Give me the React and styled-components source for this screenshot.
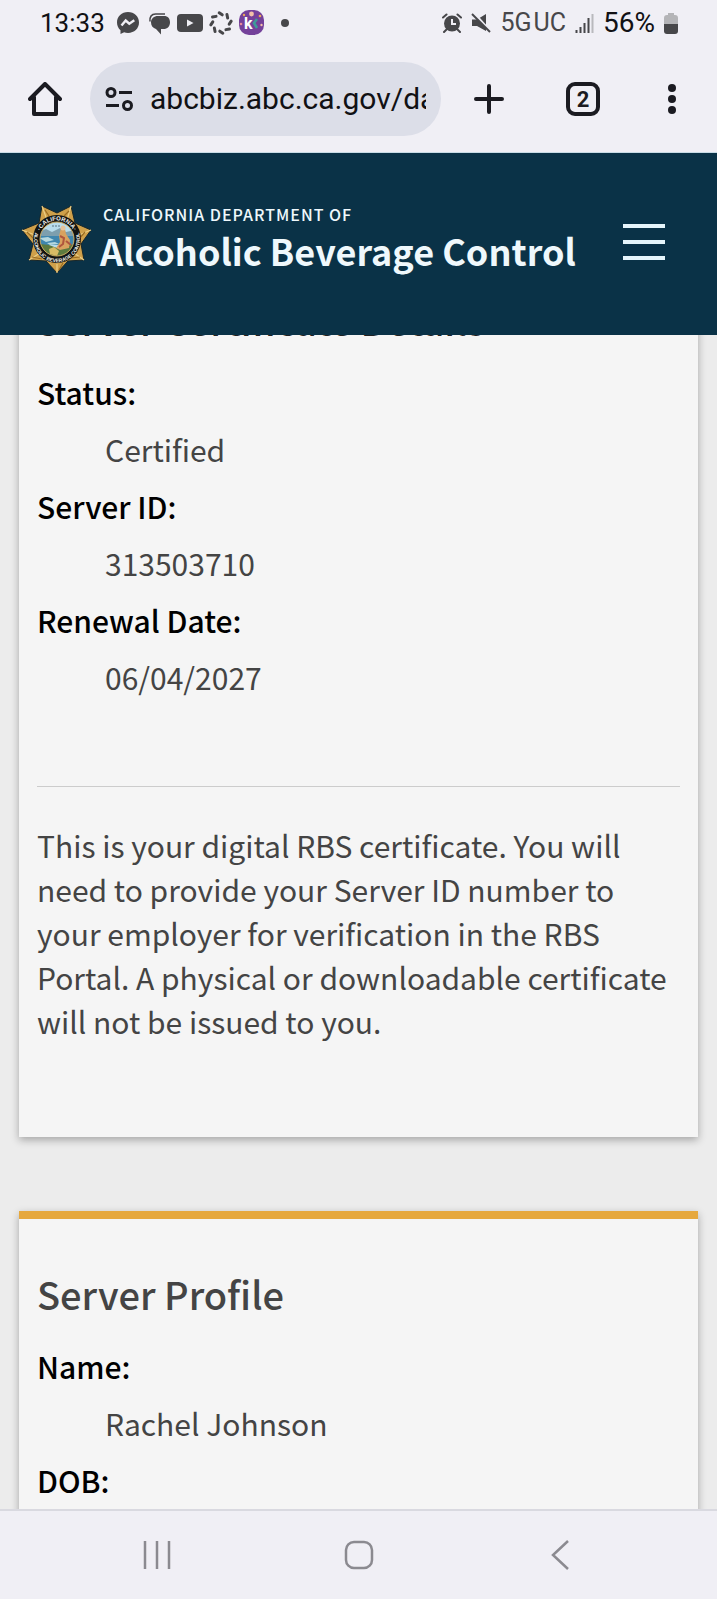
import React from 'react'
import styled, { createGlobalStyle } from 'styled-components'

const details = [
  { label: 'Status:', value: 'Certified' },
  { label: 'Server ID:', value: '313503710' },
  { label: 'Renewal Date:', value: '06/04/2027' },
]

const profile = [
  { label: 'Name:', value: 'Rachel Johnson' },
  { label: 'DOB:' },
]

function MessengerIcon() {
  return (
    <Icon width="26" height="26" viewBox="0 0 26 26">
      <path d="M13 2C6.700 2 2 6.500 2 12.500c0 3.200 1.300 5.900 3.500 7.700V24l3.600-1.700c1.200.4 2.500.6 3.900.6 6.300 0 11-4.500 11-10.400S19.300 2 13 2z" fill="#47474a" />
      <path d="M6.500 15.500l4.200-5 3.600 3.200 5-3.400" fill="none" stroke="#f0eff5" strokeWidth="2.400" />
    </Icon>
  )
}

function ChatIcon() {
  return (
    <Icon width="26" height="26" viewBox="0 0 26 26">
      <path d="M4 11.500C3.500 7 5.500 4 9.500 4H19" fill="none" stroke="#47474a" strokeWidth="1.600" />
      <path d="M12 6h6c4 0 6 2.700 6 6.500S21.500 19 17.500 19H15v5.500L10 19c-3-.8-5-3.300-5-6.500C5 8.500 8 6 12 6z" fill="#47474a" />
    </Icon>
  )
}

function VideoIcon() {
  return (
    <Icon width="26" height="26" viewBox="0 0 26 26">
      <rect y="4" width="26" height="18" rx="4" fill="#47474a" />
      <path d="M10 9.500v7l6.500-3.500z" fill="#f0eff5" />
    </Icon>
  )
}

function SwirlIcon() {
  return (
    <Icon width="26" height="26" viewBox="0 0 26 26">
      {[0, 45, 90, 135, 180, 225, 270, 315].map((a) => (
        <line key={a} x1="11.200" y1="2.800" x2="14.200" y2="4.800" transform={`rotate(${a} 13 13)`} stroke="#47474a" strokeWidth="3" strokeLinecap="round" />
      ))}
    </Icon>
  )
}

function AppIcon() {
  return (
    <Icon width="26" height="26" viewBox="0 0 26 26">
      <rect width="25" height="25" rx="10" fill="#74419a" />
      <circle cx="12.500" cy="4" r="2.400" fill="#f3c0a8" />
      <circle cx="5" cy="5" r="1.200" fill="#e9a75b" />
      <circle cx="21" cy="6" r="1.300" fill="#e9a75b" />
      <circle cx="2" cy="14" r="1.300" fill="#e58a9a" />
      <circle cx="22.500" cy="15" r="1.200" fill="#f3c0a8" />
      <text x="5" y="19" fontSize="16" fontWeight="700" fontFamily="Roboto, sans-serif" fill="#fff">k</text>
      <path d="M18 9l-3 4 3 5" fill="none" stroke="#3f9a9a" strokeWidth="2.600" />
    </Icon>
  )
}

function DotIcon() {
  return (
    <Icon width="26" height="26" viewBox="0 0 26 26">
      <circle cx="15" cy="13" r="4" fill="#47474a" />
    </Icon>
  )
}

function AlarmIcon() {
  return (
    <Icon width="20" height="20" viewBox="0 0 20 20">
      <circle cx="10" cy="10.500" r="8" fill="#47474a" />
      <path d="M1 4.500L4.500 1.500M19 4.500L15.500 1.500M4.500 16.500L2 19M15.500 16.500L18 19" stroke="#47474a" strokeWidth="2" strokeLinecap="round" />
      <path d="M10 6v5h4" fill="none" stroke="#f0eff5" strokeWidth="2" />
    </Icon>
  )
}

function MuteIcon() {
  return (
    <Icon width="20" height="20" viewBox="0 0 20 20">
      <path d="M1 6.500h5L15 1v17l-9-5H1z" fill="#47474a" />
      <path d="M2 -1l18 20" stroke="#f0eff5" strokeWidth="2.500" />
      <path d="M1 1l18 18" stroke="#47474a" strokeWidth="2" />
    </Icon>
  )
}

function SignalIcon() {
  return (
    <Icon width="19" height="20" viewBox="0 0 19 20">
      <path d="M1.500 17v3M5.500 14v6M9.500 10v10M13.500 5v15" stroke="#47474a" strokeWidth="2" />
      <path d="M17.500 1v19" stroke="#b9b9bd" strokeWidth="2" />
    </Icon>
  )
}

function BatteryIcon() {
  return (
    <Icon width="14" height="21" viewBox="0 0 14 21">
      <path d="M4 0h6v2h1a3 3 0 0 1 3 3v6H0V5a3 3 0 0 1 3-3h1z" fill="#b4b4b7" />
      <path d="M0 11h14v7a3 3 0 0 1-3 3H3a3 3 0 0 1-3-3z" fill="#47474a" />
    </Icon>
  )
}

function HomeIcon() {
  return (
    <Icon width="34" height="34" viewBox="0 0 34 34" fill="none" stroke="#1b1b21" strokeWidth="4" strokeLinejoin="round" strokeLinecap="round">
      <path d="M2 17L17 2l15 15M6 15v17h22V15" />
    </Icon>
  )
}

function SiteInfoIcon() {
  return (
    <Icon width="28" height="24" viewBox="0 0 28 24" fill="none" stroke="#1b1b21" strokeWidth="3">
      <circle cx="6" cy="5.500" r="4" />
      <path d="M14 5.500h13M1 18.500h13" />
      <circle cx="22.500" cy="18.500" r="4" />
    </Icon>
  )
}

function PlusIcon() {
  return (
    <Icon width="30" height="30" viewBox="0 0 30 30" stroke="#1b1b21" strokeWidth="4" strokeLinecap="round">
      <path d="M15 2v26M2 15h26" />
    </Icon>
  )
}

function DotsIcon() {
  return (
    <Icon width="8" height="32" viewBox="0 0 8 32" fill="#1b1b21">
      <circle cx="4" cy="5" r="4" />
      <circle cx="4" cy="16" r="4" />
      <circle cx="4" cy="27" r="4" />
    </Icon>
  )
}

function Badge() {
  return (
    <Icon width="72" height="71" viewBox="0 0 72 71">
      <defs>
        <path id="ringTop" d="M17.500 35a18.500 18.500 0 0 1 37 0" />
        <path id="ringBottom" d="M14.500 27a23 23 0 1 0 43 0" />
        <clipPath id="seal"><circle cx="36" cy="35" r="17" /></clipPath>
      </defs>
      <path d="M21 2l15 7 14-7 4 17 16 7-10 14 3 16-16 1-11 12-11-12-17-1 4-16L1 26l17-7z" fill="#cfa04a" stroke="#17262a" strokeWidth="1" />
      <path d="M21 2l5 14M50 2l-4 14M70 26l-12 5M63 56l-10-7M36 69v-9M8 56l11-7M1 26l13 5" stroke="#ecce84" strokeWidth="1.200" />
      <path d="M24 6l4 6M48 7l-5 5M64 28l-6 7M59 53l-9 1M38 66l4-7M11 53l10 2M6 28l7 7" stroke="#9a6c22" strokeWidth="1.200" />
      <circle cx="36" cy="35" r="24" fill="#101313" />
      <circle cx="36" cy="35" r="17" fill="#b8dcec" />
      <g clipPath="url(#seal)">
        <path d="M18 28l7-3 6 3 8-4 6 4 9-2v12H18z" fill="#7d9fae" />
        <path d="M18 32h36v9H18z" fill="#3f86ae" />
        <path d="M18 34l9-1 6 3-8 2zM26 39l8-1 4 2-9 1z" fill="#b5d8df" />
        <path d="M18 40l10 1 8 3 18-4v13H18z" fill="#5d7a3f" />
        <path d="M40 24l4 1 1 5 4 6-1 8-9 2-4-2 4-6-1-6z" fill="#d9a25f" />
        <path d="M39 32l4 2-1 6-4 3M45 37l5 4" fill="none" stroke="#b0553d" strokeWidth="2" />
        <circle cx="42" cy="24" r="2.500" fill="#e4c29a" />
        <path d="M28 45l5-2 5 4-2 5-7-2z" fill="#d8bc65" />
        <path d="M31 22h9" stroke="#5a7484" strokeWidth="1" strokeDasharray="2 1" />
      </g>
      <circle cx="36" cy="35" r="17" fill="none" stroke="#c9a557" strokeWidth="1" />
      <RingText $size="6px"><textPath href="#ringTop" startOffset="50%">·CALIFORNIA·</textPath></RingText>
      <RingText $size="5px"><textPath href="#ringBottom" startOffset="50%">ALCOHOLIC BEVERAGE CONTROL</textPath></RingText>
    </Icon>
  )
}

function DetailList({ items }) {
  return (
    <List>
      {items.map((item) => (
        <React.Fragment key={item.label}>
          <Label>{item.label}</Label>
          {item.value && <Value>{item.value}</Value>}
        </React.Fragment>
      ))}
    </List>
  )
}

function App() {
  return (
    <Screen>
      <GlobalStyle />
      <StatusBar>
        <Notifications>
          <Clock>13:33</Clock>
          <MessengerIcon />
          <ChatIcon />
          <VideoIcon />
          <SwirlIcon />
          <AppIcon />
          <DotIcon />
        </Notifications>
        <System>
          <AlarmIcon />
          <MuteIcon />
          <Network>5G<span>UC</span></Network>
          <SignalIcon />
          <Percent>56%</Percent>
          <BatteryIcon />
        </System>
      </StatusBar>

      <Toolbar>
        <IconButton aria-label="Home"><HomeIcon /></IconButton>
        <AddressBar>
          <SiteInfoIcon />
          <Address aria-label="Address" defaultValue="abcbiz.abc.ca.gov/dashboard" />
        </AddressBar>
        <Actions>
          <IconButton aria-label="New tab"><PlusIcon /></IconButton>
          <IconButton aria-label="Tabs"><TabCount>2</TabCount></IconButton>
          <IconButton $narrow aria-label="Menu"><DotsIcon /></IconButton>
        </Actions>
      </Toolbar>

      <SiteHeader>
        <Brand href="#">
          <Badge />
          <BrandText>
            <Department>CALIFORNIA DEPARTMENT OF</Department>
            <Agency>Alcoholic Beverage Control</Agency>
          </BrandText>
        </Brand>
        <MenuButton aria-label="Open menu">
          <span />
          <span />
          <span />
        </MenuButton>
      </SiteHeader>

      <Main>
        {/* scrolled up under the site header */}
        <Card $scrolled>
          <CardTitle $dark>Server Certificate Details</CardTitle>
          <DetailList items={details} />
          <Divider />
          <Note>
            This is your digital RBS certificate. You will need to provide your Server ID number to
            your employer for verification in the RBS Portal. A physical or downloadable certificate
            will not be issued to you.
          </Note>
        </Card>
        <Card>
          <CardTitle>Server Profile</CardTitle>
          <DetailList items={profile} />
        </Card>
      </Main>

      <NavBar>
        <NavButton aria-label="Recent apps">
          <Icon width="28" height="30" viewBox="0 0 28 30" stroke="#8b8a90" strokeWidth="2.500">
            <path d="M2 1v28M14 1v28M26 1v28" />
          </Icon>
        </NavButton>
        <NavButton aria-label="Home screen">
          <Icon width="30" height="30" viewBox="0 0 30 30" fill="none" stroke="#8b8a90" strokeWidth="2.500">
            <rect x="2" y="2" width="26" height="26" rx="8" />
          </Icon>
        </NavButton>
        <NavButton aria-label="Back">
          <Icon width="18" height="30" viewBox="0 0 18 30" fill="none" stroke="#8b8a90" strokeWidth="2.500">
            <path d="M17 1L2 15l15 14" />
          </Icon>
        </NavButton>
      </NavBar>
    </Screen>
  )
}

export default App

const GlobalStyle = createGlobalStyle`
    * {
        box-sizing: border-box;
    }

    body {
        margin: 0;
        font-family: "Noto Sans CJK SC", "Open Sans", sans-serif;
        color: #444444;
        background: #ECECEC;
    }

    button {
        padding: 0;
        border: 0;
        background: none;
        font: inherit;
    }
`

const Screen = styled.div`
    height: 100vh;
    display: flex;
    flex-direction: column;
    overflow: hidden;
`

const Icon = styled.svg`
    display: block;
    flex: none;
`

const RingText = styled.text`
    font-family: "Liberation Sans", sans-serif;
    font-size: ${({ $size }) => $size};
    font-weight: 700;
    text-anchor: middle;
    fill: #F4F4F0;
`

const StatusBar = styled.div`
    flex: none;
    height: 46px;
    padding: 0 39px 0 40px;
    display: flex;
    justify-content: space-between;
    align-items: center;
    background: #F0EFF5;
    font-family: Roboto, sans-serif;
    font-size: 26px;
    line-height: 30px;
    color: #111114;
`

const Notifications = styled.div`
    display: flex;
    align-items: center;
    gap: 5px;
`

const Clock = styled.span`
    margin-right: 5px;
`

const System = styled.div`
    display: flex;
    align-items: center;
    gap: 9px;
`

const Network = styled.span`
    display: flex;
    gap: 2px;
    font-size: 25px;
    color: #47474A;
`

const Percent = styled.span`
    font-size: 28px;
`

const Toolbar = styled.div`
    flex: none;
    height: 107px;
    padding: 0 26px 0 21px;
    display: flex;
    align-items: center;
    background: #F0EFF5;
    border-bottom: 1px solid #C9DCE6;
`

const IconButton = styled.button`
    flex: none;
    width: ${({ $narrow }) => ($narrow ? '38px' : '48px')};
    height: 48px;
    display: flex;
    justify-content: center;
    align-items: center;
`

const AddressBar = styled.div`
    flex: 1;
    min-width: 0;
    height: 74px;
    margin: 0 24px 0 21px;
    padding: 0 15px;
    display: flex;
    align-items: center;
    gap: 17px;
    background: #DCDEE8;
    border-radius: 999px;
`

const Address = styled.input`
    flex: 1;
    min-width: 0;
    padding: 0;
    border: 0;
    outline: 0;
    background: none;
    font-family: Roboto, sans-serif;
    font-size: 30px;
    line-height: 40px;
    color: #111114;
`

const Actions = styled.div`
    display: flex;
    gap: 46px;
`

const TabCount = styled.span`
    width: 34px;
    height: 34px;
    display: flex;
    justify-content: center;
    align-items: center;
    border: 4px solid #1B1B21;
    border-radius: 9px;
    font-family: Roboto, sans-serif;
    font-size: 22px;
    font-weight: 700;
    color: #1B1B21;
`

const SiteHeader = styled.header`
    flex: none;
    height: 182px;
    padding: 51px 52px 0 21px;
    display: flex;
    justify-content: space-between;
    align-items: flex-start;
    background: #0A3247;
`

const Brand = styled.a`
    display: flex;
    gap: 7px;
    color: #EFF8FC;
    text-decoration: none;
`

const BrandText = styled.div`
    display: flex;
    flex-direction: column;
`

const Department = styled.span`
    padding-left: 3px;
    font-size: 16px;
    font-weight: 500;
    line-height: 20px;
    letter-spacing: 1px;
`

const Agency = styled.span`
    font-size: 36px;
    font-weight: 700;
    line-height: 52px;
    white-space: nowrap;
`

const MenuButton = styled.button`
    width: 42px;
    height: 36px;
    margin-top: 20px;
    display: flex;
    flex-direction: column;
    justify-content: space-between;

    span {
        width: 100%;
        height: 4px;
        background: #E6F5FB;
    }
`

const Main = styled.main`
    flex: 1;
    min-height: 0;
    padding: 0 19px;
    overflow: hidden;
`

const Card = styled.section`
    margin-top: ${({ $scrolled }) => ($scrolled ? '-98px' : '74px')};
    padding: 47px 18px 94px;
    background: #F5F5F5;
    border-top: 8px solid #E6A83E;
    box-shadow: 0 3px 8px rgba(0, 0, 0, 0.3);
`

const CardTitle = styled.h2`
    margin: 0;
    font-size: 38px;
    font-weight: 500;
    line-height: 56px;
    color: ${({ $dark }) => ($dark ? '#222222' : '#444444')};
`

const List = styled.dl`
    margin: 16px 0 0;
    font-size: 30px;
    line-height: 57px;
`

const Label = styled.dt`
    font-weight: 500;
    color: #000000;
`

const Value = styled.dd`
    margin: 0 0 0 68px;
`

const Divider = styled.hr`
    margin: 80px 0 36px;
    border: 0;
    border-top: 1px solid #CCCCCC;
`

const Note = styled.p`
    margin: 0;
    font-size: 30px;
    line-height: 44px;
`

const NavBar = styled.nav`
    flex: none;
    height: 90px;
    padding: 0 56px;
    display: flex;
    background: #F0EFF5;
    border-top: 2px solid #D9D9E0;
`

const NavButton = styled.button`
    flex: 1;
    display: flex;
    justify-content: center;
    align-items: center;
`
